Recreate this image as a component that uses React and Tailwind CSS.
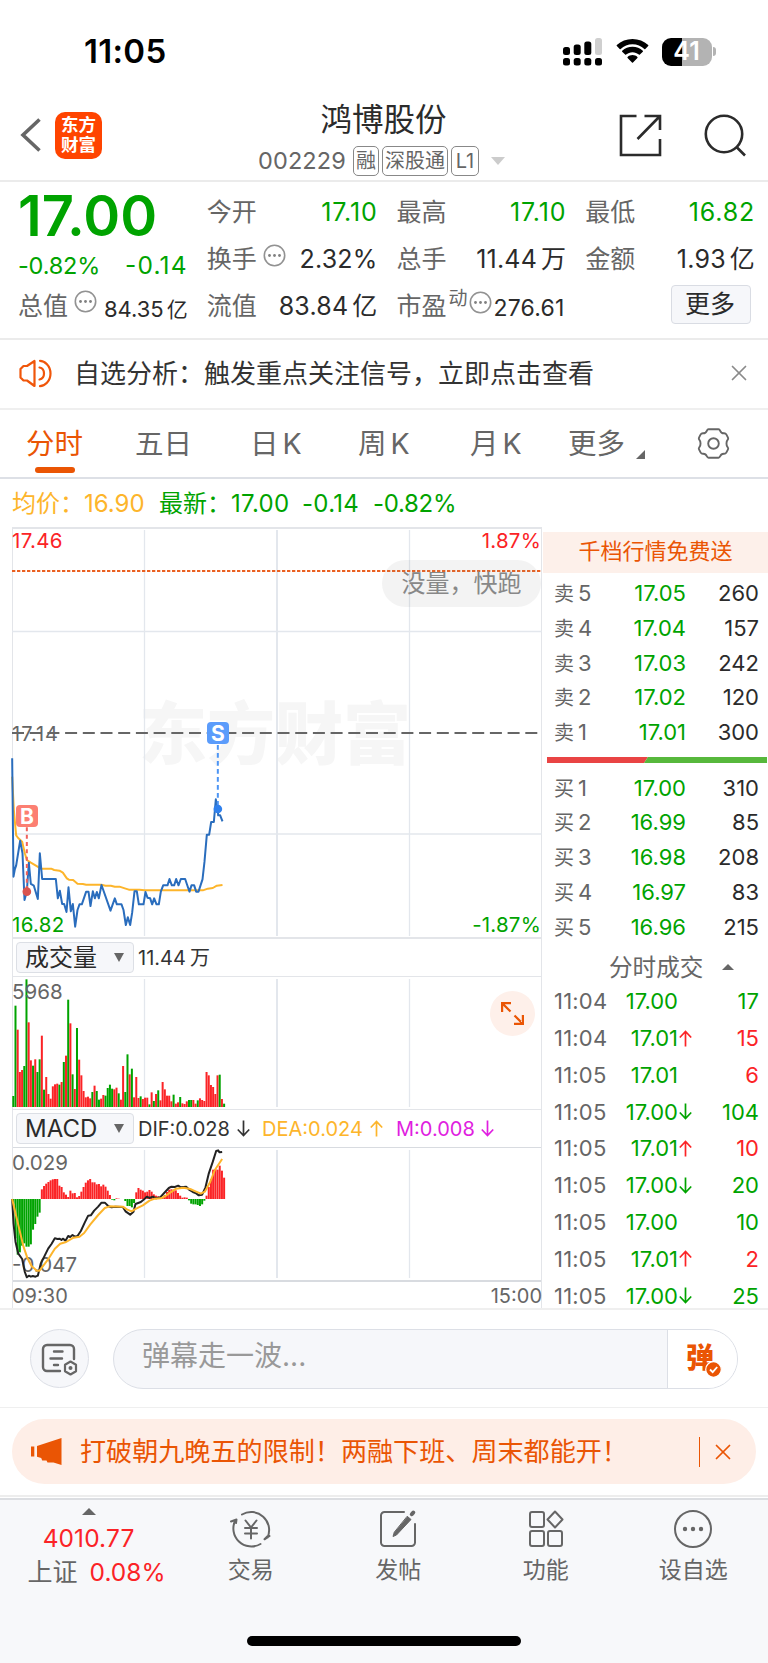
import { X } from 'lucide-react'

// per-minute series, starting at 09:30
const volume = [
  -33, -304, 232, 105, 111, -123, -383, 254, 140, -124, 143, -105, -143, 214, -52, 90, 39, 25, 62, 68,
  70, -67, 75, -135, 154, -322, 251, -98, 54, -237, 142, 95, 48, 29, 31, 26, -45, 64, -48, -22,
  25, 36, -34, -57, -67, -55, 53, 58, -41, 22, 123, -45, -158, 98, -115, 29, 90, 27, -32, 24,
  28, 28, -8, 44, -18, 39, -50, 20, 75, 53, 34, 34, 17, -37, 10, 14, -30, 11, 9, 17,
  -21, -21, 21, 10, -20, 26, 21, 18, 105, 95, 66, 60, 39, 95, -97, 24, -10,
]

const macd = [
  -14, -118, -167, -160, -140, -133, -143, -143, -136, -92, -75, -53, -41, 29, 39, 46, 51, 56, 59, 60,
  60, 40, 36, 20, 13, 6, 25, 17, 18, 5, 9, 22, 36, 49, 56, 60, 50, 50, 44, 45,
  38, 43, 37, 25, 12, -2, -4, 2, 1, 0, 0, -6, -21, -21, -25, -12, 20, 33, 28, 25,
  20, 22, 27, 22, 14, 10, 8, 2, 5, 12, 21, 28, 29, 28, 26, 18, 10, 4, 5, 4,
  -4, -14, -16, -16, -18, -21, -16, -5, 10, 36, 60, 88, 90, 88, 100, 85, 64,
]

const pricePath =
  '38,235 42,590 46,568 50,556 62,482 69,520 75,660 82,635 88,548 94,612 103,617 115,657 121,520 128,597 169,597 175,655 181,632 188,672 194,672 201,696 207,622 214,694 220,672 227,740 234,690 240,673 247,673 260,635 267,635 273,678 280,634 286,655 292,636 298,655 306,615 333,692 346,655 352,673 366,673 372,690 379,735 385,712 392,735 398,698 405,634 412,634 418,673 432,673 438,636 444,653 452,655 458,673 464,655 471,673 478,673 484,635 491,616 504,616 510,597 517,616 524,616 530,597 537,616 544,597 557,597 563,615 570,635 576,616 584,616 590,635 597,635 609,598 615,545 622,464 629,464 635,426 643,426 649,358 655,387 656,406 662,406 669,424'
const avgPath =
  '38,290 43,390 50,466 56,474 68,485 76,520 82,540 94,548 108,556 124,566 155,566 164,570 180,572 190,578 202,595 208,599 221,600 234,611 250,612 260,614 306,614 318,617 334,617 346,620 360,620 376,625 388,629 420,629 435,631 610,631 625,626 640,624 652,617 669,615'
const difPath =
  '38,297 42,370 48,425 56,460 68,477 76,516 82,532 88,527 94,530 100,528 108,530 115,527 124,490 136,466 146,446 156,432 166,415 174,417 180,416 186,420 190,416 198,422 206,408 212,411 219,405 226,410 234,408 244,393 256,367 266,347 274,346 284,332 296,320 306,308 316,308 326,318 336,322 348,320 370,321 378,334 392,344 402,335 408,312 424,306 434,298 442,290 450,294 460,290 470,295 482,292 494,279 508,264 516,260 526,261 536,257 544,262 560,260 570,270 580,276 590,280 598,286 608,284 618,262 628,220 640,185 650,153 656,151 660,157 668,156'
const deaPath =
  '38,297 48,340 60,390 72,440 84,475 96,498 112,512 120,512 132,496 148,475 166,446 182,431 200,426 222,413 240,410 254,399 272,374 296,345 316,324 330,319 370,320 382,328 396,334 410,326 430,316 450,302 466,296 484,295 498,288 512,278 530,266 552,263 572,267 588,274 604,281 616,275 632,246 646,210 668,177'

const asks = [
  ['卖5', '17.05', '260'],
  ['卖4', '17.04', '157'],
  ['卖3', '17.03', '242'],
  ['卖2', '17.02', '120'],
  ['卖1', '17.01', '300'],
]
const bids = [
  ['买1', '17.00', '310'],
  ['买2', '16.99', '85'],
  ['买3', '16.98', '208'],
  ['买4', '16.97', '83'],
  ['买5', '16.96', '215'],
]
const trades = [
  ['11:04', '17.00', '', '17', 'g'],
  ['11:04', '17.01', 'up', '15', 'r'],
  ['11:05', '17.01', '', '6', 'r'],
  ['11:05', '17.00', 'down', '104', 'g'],
  ['11:05', '17.01', 'up', '10', 'r'],
  ['11:05', '17.00', 'down', '20', 'g'],
  ['11:05', '17.00', '', '10', 'g'],
  ['11:05', '17.01', 'up', '2', 'r'],
  ['11:05', '17.00', 'down', '25', 'g'],
]

function Arrow({ dir, className }) {
  return (
    <svg width="13" height="17" viewBox="0 0 13 17" className={className} fill="none" stroke="currentColor" strokeWidth="1.7">
      <path d={dir === 'up' ? 'M6.5 16.5V1.5M.8 7.5l5.7-6 5.7 6' : 'M6.5.5v15M.8 9.5l5.7 6 5.7-6'} />
    </svg>
  )
}

function Dots() {
  return (
    <svg width="23" height="23" viewBox="0 0 23 23" fill="none" stroke="#929292" strokeWidth="1.6">
      <circle cx="11.5" cy="11.5" r="10.2" />
      <g fill="#808080" stroke="none">
        <circle cx="6.5" cy="11.5" r="1.4" />
        <circle cx="11.5" cy="11.5" r="1.4" />
        <circle cx="16.5" cy="11.5" r="1.4" />
      </g>
    </svg>
  )
}

function Cell({ label, value, unit, green }) {
  return (
    <div className="flex h-[47px] items-center justify-between">
      <span className="text-[#666]">{label}</span>
      <span className={green ? 'tracking-[0.8px] text-[#00a300]' : 'tracking-[0.2px] text-[#2b2b2b]'}>
        {value}
        {unit && <span className="ml-1">{unit}</span>}
      </span>
    </div>
  )
}

function StatusBar() {
  return (
    <div className="flex h-[96px] items-center justify-between pt-[7px] pr-[52px] pl-[84px]">
      <span className="text-[33px] font-semibold tracking-[0.3px] text-black">11:05</span>
      <div className="flex items-center">
        <svg width="39" height="28" viewBox="0 0 39 28">
          <rect x="0" y="9" width="7" height="8" rx="2.5" />
          <rect x="10.7" y="6.5" width="7" height="10.5" rx="2.5" />
          <rect x="21.3" y="3.5" width="7" height="13.5" rx="2.5" />
          <rect x="32" y="0" width="7" height="17" rx="2.5" fill="#cfcfcf" />
          <rect x="0" y="20" width="7" height="7.5" rx="2.5" />
          <rect x="10.7" y="20" width="7" height="7.5" rx="2.5" />
          <rect x="21.3" y="20" width="7" height="7.5" rx="2.5" />
          <rect x="32" y="20" width="7" height="7.5" rx="2.5" />
        </svg>
        <svg width="33" height="25" viewBox="0 0 33 25" className="ml-[14px]">
          <path d="M16.5 5.2c4.5 0 8.7 1.8 11.8 4.7.3.3.7.3 1 0l2.900-2.900c.3-.3.3-.7 0-1C28 2.200 22.500 0 16.500 0S5 2.200.8 6c-.3.3-.3.7 0 1l2.900 2.900c.3.3.7.3 1 0C7.800 7 12 5.200 16.500 5.200z" />
          <path d="M16.500 13.200c2.500 0 4.700.9 6.400 2.400.3.3.7.3 1 0l2.900-2.900c.3-.3.3-.7 0-1-2.700-2.500-6.300-4-10.300-4s-7.600 1.500-10.300 4c-.3.3-.3.7 0 1l2.900 2.900c.3.3.7.3 1 0 1.700-1.500 3.900-2.400 6.400-2.400z" />
          <path d="M21.400 18c.3.3.3.7 0 1l-4.400 4.600c-.3.3-.7.3-1 0L11.600 19c-.3-.3-.3-.7 0-1 1.300-1.200 3-1.900 4.900-1.900s3.600.7 4.900 1.900z" />
        </svg>
        <div className="ml-[13px] flex h-[28px] w-[50px] items-center justify-center rounded-[9px] bg-[linear-gradient(90deg,#000_41%,#b3b3b3_41%)] text-[25px] font-semibold text-white">
          41
        </div>
        <div className="ml-[1.500px] h-[9px] w-[3px] rounded-r-full bg-[#b3b3b3]" />
      </div>
    </div>
  )
}

function Header() {
  return (
    <header className="flex h-[86px] items-center justify-between border-b-2 border-[#ebebeb] pr-[22px] pl-[20px]">
      <div className="flex w-[200px] items-center pb-[6px]">
        <svg width="22" height="34" viewBox="0 0 22 34" fill="none" stroke="#666" strokeWidth="3.600">
          <path d="M19.500 1.500L3 17l16.500 15.500" />
        </svg>
        <div className="ml-[13px] flex h-[47px] w-[47px] flex-col items-center justify-center rounded-[10px] bg-[#ff4400] text-[17.500px] leading-[20px] font-bold text-white">
          <span>东方</span>
          <span>财富</span>
        </div>
      </div>
      <div className="flex flex-col items-center pl-[10px]">
        <h1 className="mr-[9px] text-[31.500px] leading-[40px] text-[#2b2b2b]">鸿博股份</h1>
        <div className="mt-[6px] mr-[13px] flex h-[30px] items-center text-[20px] text-[#666]">
          <span className="mr-[7px] text-[23.500px] tracking-[0.1px]">002229</span>
          <span className="mr-[3px] flex h-[30px] w-[26px] items-center justify-center rounded-[5px] border-[1.500px] border-[#888]">融</span>
          <span className="mr-[3px] flex h-[30px] w-[66px] items-center justify-center rounded-[5px] border-[1.500px] border-[#888]">深股通</span>
          <span className="flex h-[30px] w-[28px] items-center justify-center rounded-[5px] border-[1.500px] border-[#888]">L1</span>
          <svg width="14" height="8" viewBox="0 0 14 8" className="ml-[12px]">
            <path d="M0 0h14L7 8z" fill="#ccc" />
          </svg>
        </div>
      </div>
      <div className="flex w-[200px] justify-end gap-[42px] pb-[6px]">
        <svg width="43" height="43" viewBox="0 0 43 43" fill="none" stroke="#2b2b2b" strokeWidth="2.600">
          <path d="M17.500 2H2v39h39V25M25.500 2H41v14M41 2L18.500 25" />
        </svg>
        <svg width="42" height="43" viewBox="0 0 42 43" fill="none" stroke="#2b2b2b" strokeWidth="2.600">
          <circle cx="20" cy="20" r="18.200" />
          <path d="M32.500 33l8.500 8.500" />
        </svg>
      </div>
    </header>
  )
}

function Quote() {
  return (
    <section className="flex h-[158px] border-b-2 border-[#ebebeb] pt-[7px] pr-[13px] pl-[18px] text-[25px] leading-none">
      <div className="mr-[19px] w-[170px] text-[#00a300]">
        <div className="flex h-[53px] items-center text-[56px] font-semibold">17.00</div>
        <div className="flex h-[47px] items-center justify-between text-[23.500px] tracking-[-0.200px]">
          <span>-0.82%</span>
          <span className="text-[24.500px] tracking-[1.200px]">-0.14</span>
        </div>
        <div className="flex h-[35px] items-center justify-between text-[#666]">
          <span className="flex items-center">
            总值
            <span className="mb-[10px] ml-[6px]"><Dots /></span>
          </span>
          <span className="pt-[4px] text-[22px] whitespace-nowrap text-[#2b2b2b]">84.35<span className="ml-[3px] text-[21px]">亿</span></span>
        </div>
      </div>
      <div className="mr-[19px] w-[171px]">
        <Cell label="今开" value="17.10" green />
        <Cell
          label={<span className="flex items-center">换手<span className="mb-[8px] ml-[6px]"><Dots /></span></span>}
          value="2.32%"
        />
        <Cell label="流值" value="83.84" unit="亿" />
      </div>
      <div className="mr-[19px] w-[170px]">
        <Cell label="最高" value="17.10" green />
        <Cell label="总手" value="11.44" unit="万" />
        <div className="flex h-[47px] items-center whitespace-nowrap text-[#666]">
          市盈
          <span className="mb-[16px] ml-[2px] text-[19px]">动</span>
          <span className="mb-[8px] ml-[1px]"><Dots /></span>
          <span className="ml-[2px] pt-[3px] text-[23px] tracking-[0.200px] text-[#2b2b2b]">276.61</span>
        </div>
      </div>
      <div className="w-[170px]">
        <Cell label="最低" value="16.82" green />
        <Cell label="金额" value="1.93" unit="亿" />
        <div className="mt-[2px] mr-[4px] ml-auto flex h-[39px] w-[80px] items-center justify-center rounded-[4px] border border-[#d9dce3] bg-[#f6f7fa] pr-[2px] text-[#2b2b2b]">
          更多
        </div>
      </div>
    </section>
  )
}

function Notice() {
  return (
    <div className="flex h-[70px] items-center border-b-2 border-[#efefef] pr-[16px] pb-[2px] pl-[19px] text-[26px] text-[#333]">
      <svg width="34" height="29" viewBox="0 0 34 29" fill="none" stroke="#f0560a" strokeWidth="2.200" strokeLinejoin="round" strokeLinecap="round">
        <path d="M15.500 2v25L8 21.500H4.500l-3-3v-8.500l3-3H8zM21 1.800c4.500 0 10.500 4.700 10.500 12.700S25.500 27 21 27.200M20.500 8.500c2.500.5 4.500 2.500 4.500 6s-2 5.500-4.500 6" />
      </svg>
      <span className="ml-[21px]">自选分析：触发重点关注信号，立即点击查看</span>
      <X size={26} strokeWidth={1.600} className="ml-auto text-[#8a8a8a]" />
    </div>
  )
}

function KTab({ label, className }) {
  return (
    <span className={`pt-[20px] ${className}`}>
      {label}
      <span className="ml-[4px]">K</span>
    </span>
  )
}

function Tabs() {
  return (
    <nav className="flex h-[69px] border-b-2 border-[#dde0e6] pl-[26px] text-[28.500px] leading-none text-[#666]">
      <div className="flex w-[109px] flex-col pt-[20px] text-[#ea5504]">
        分时
        <span className="mt-[8px] ml-[9px] h-[6px] w-[40px] rounded-[3px] bg-[#ea5504]" />
      </div>
      <span className="w-[115px] pt-[20px]">五日</span>
      <KTab label="日" className="w-[108px]" />
      <KTab label="周" className="w-[112px]" />
      <KTab label="月" className="w-[95px]" />
      <span className="flex w-[128px] pt-[20px] pl-[3px] whitespace-nowrap">
        更多
        <svg width="9" height="9" viewBox="0 0 9 9" className="mt-[20px] ml-[11px]">
          <path d="M9 0v9H0z" fill="#666" />
        </svg>
      </span>
      <svg width="33" height="31" viewBox="0 0 33 31" className="mt-[18px] ml-[4px]" fill="none" stroke="#666" strokeWidth="1.900" strokeLinejoin="round">
        <path d="M11.500 1.300h10c1 0 1.300.6 1.700 1.500.7 1.800 2 2.600 3.900 2.500 1.300 0 1.700.2 2.200 1.100l1.700 3.200c.5.900.3 1.400-.4 2.200-1.500 1.700-1.500 5.700 0 7.400.7.800.9 1.300.4 2.200l-1.700 3.200c-.5.900-.9 1.100-2.200 1.100-1.900-.1-3.200.7-3.900 2.500-.4.900-.7 1.500-1.700 1.500h-10c-1 0-1.300-.6-1.700-1.500-.7-1.800-2-2.600-3.900-2.500-1.300 0-1.700-.2-2.200-1.100L2 21.400c-.5-.9-.3-1.400.4-2.200 1.500-1.700 1.500-5.700 0-7.400C1.700 11 1.500 10.500 2 9.600l1.700-3.200c.5-.9.9-1.100 2.200-1.100 1.900.1 3.200-.7 3.900-2.500.4-.9.700-1.500 1.700-1.500z" />
        <circle cx="16.500" cy="15.500" r="5.300" />
      </svg>
    </nav>
  )
}

// vertical grid lines shared by all three panes
function Grid({ h }) {
  return (
    <g stroke="#e3e7ed">
      <path d={`M132.500 2v${h - 4}M397.500 2v${h - 4}`} strokeWidth="1.300" />
      <path d={`M265 2v${h - 4}`} strokeWidth="2" />
    </g>
  )
}

function PriceChart() {
  return (
    <div className="relative h-[412px] border-y-2 border-[#e3e5e9] text-[20.500px] leading-none">
      <svg width="529" height="410" viewBox="0 0 529 410" className="absolute -top-px -left-px overflow-visible">
        <text x="263" y="231" textAnchor="middle" fontSize="68" fontWeight="900" fill="#f6f6f6">东方财富</text>
        <Grid h={410} />
        <path d="M0 103.500h530M0 306h530" stroke="#e3e7ed" strokeWidth="1.500" />
        <path d="M0 43h530" stroke="#ea6020" strokeWidth="2" strokeDasharray="3.300 1.700" />
        <path d="M0 205h530" stroke="#666" strokeWidth="2" strokeDasharray="12 5.700" />
        <g transform="translate(-12.500 152) scale(.33333)" fill="none" strokeLinejoin="round">
          <polyline points={avgPath} stroke="#fdb52b" strokeWidth="6" />
          <polyline points={pricePath} stroke="#2a6dbd" strokeWidth="6" />
          <path d="M82 442V630" stroke="#f0625c" strokeWidth="6" strokeDasharray="12 10" />
          <circle cx="82" cy="635" r="13" fill="#d9544f" />
          <path d="M655 195V380" stroke="#4c95f5" strokeWidth="6" strokeDasharray="14 10" />
          <circle cx="655" cy="387" r="13" fill="#2f80ed" />
        </g>
        <rect x="4" y="277" width="22" height="22" rx="4" fill="#fc7f72" />
        <rect x="195" y="194" width="22" height="22" rx="4" fill="#5b9cfb" />
        <g fill="#fff" fontSize="21" fontWeight="700" textAnchor="middle">
          <text x="15" y="295.600">B</text>
          <text x="206" y="212.600">S</text>
        </g>
      </svg>
      <span className="absolute top-[2px] -left-px tracking-[0.300px] text-[#fb2326]">17.46</span>
      <span className="absolute top-[2px] right-0 tracking-[0.200px] text-[#fb2326]">1.87%</span>
      <span className="absolute top-[195px] -left-px text-[20px] tracking-[1px] text-[#666]">17.14</span>
      <span className="absolute bottom-[2px] -left-px tracking-[0.300px] text-[#00a300]">16.82</span>
      <span className="absolute right-0 bottom-[2px] tracking-[0.200px] text-[#00a300]">-1.87%</span>
      <span className="absolute top-[31px] right-0 flex h-[47px] w-[159px] items-center justify-center rounded-full bg-[#888]/10 text-[24px] text-[#888]">
        没量，快跑
      </span>
    </div>
  )
}

function Picker({ label }) {
  return (
    <span className="ml-[3px] flex h-[31px] w-[118px] items-center justify-between rounded-[4px] border border-[#dcdfe5] bg-[#f6f7fa] pr-[9px] pl-[8px] text-[24px] text-[#2b2b2b]">
      {label}
      <svg width="10" height="9" viewBox="0 0 10 9">
        <path d="M0 0h10L5 9z" fill="#666" />
      </svg>
    </span>
  )
}

function VolumeChart() {
  return (
    <div className="relative h-[134px] border-y border-[#e3e5e9] text-[20.500px] leading-none">
      <svg width="529" height="132" viewBox="0 0 529 132" className="absolute top-0 -left-px">
        <Grid h={132} />
        {volume.map((v, i) => (
          <rect key={i} x={0.3 + i * 2.196} y={130 - Math.abs(v) / 3} width="2" height={Math.abs(v) / 3} fill={v > 0 ? '#fb2326' : '#00a300'} />
        ))}
      </svg>
      <span className="absolute top-[5px] -left-px text-[#666]">5968</span>
      <span className="absolute top-[14px] right-[6px] flex h-[45px] w-[45px] items-center justify-center rounded-full bg-[#fef0ea]">
        <svg width="23" height="23" viewBox="0 0 23 23" fill="none" stroke="#ea5504" strokeWidth="2.200">
          <path d="M1.100 10V1.100H10M1.100 1.100l8.400 8.400M21.900 13v8.900H13M21.900 21.900l-8.400-8.400" />
        </svg>
      </span>
    </div>
  )
}

function MacdChart() {
  return (
    <div className="relative h-[135px] border-t border-b-2 border-[#d8dbe0] text-[20.500px] leading-none">
      <svg width="529" height="132" viewBox="0 0 529 132" className="absolute top-0 -left-px overflow-visible">
        <Grid h={132} />
        {macd.map((v, i) => (
          <rect key={i} x={0.3 + i * 2.196} y={v > 0 ? 51 - v / 3 : 51} width="2" height={Math.abs(v) / 3} fill={v > 0 ? '#fb2326' : '#00a300'} />
        ))}
      </svg>
      <span className="absolute top-[5px] -left-px text-[#666]">0.029</span>
      <span className="absolute bottom-[5px] -left-px text-[#666]">-0.047</span>
      <svg width="529" height="132" viewBox="0 0 529 132" className="absolute top-0 -left-px overflow-visible">
        <g transform="translate(-12.500 -48) scale(.33333)" fill="none" strokeLinejoin="round" strokeWidth="6">
          <polyline points={difPath} stroke="#222" />
          <polyline points={deaPath} stroke="#fdb52b" />
        </g>
      </svg>
    </div>
  )
}

function BookRow({ row }) {
  return (
    <div className="flex h-[34.700px] items-center">
      <span className="w-[50px] text-[20px] text-[#666]">
        {row[0][0]}
        <span className="ml-[4px] text-[22px]">{row[0][1]}</span>
      </span>
      <span className="w-[82px] text-right text-[#00a300]">{row[1]}</span>
      <span className="flex-1 text-right text-[#2b2b2b]">{row[2]}</span>
    </div>
  )
}

function OrderBook() {
  return (
    <aside className="h-[780px] w-[226px] text-[22px] leading-none">
      <div className="mt-[5px] ml-[1px] flex h-[41px] items-center justify-center bg-[#fdf0ea] pb-[4px] text-[22px] text-[#ea5504]">
        千档行情免费送
      </div>
      <div className="mt-[3px] pr-[9px] pl-[12px]">
        {asks.map((r) => <BookRow key={r[0]} row={r} />)}
      </div>
      <svg width="220" height="6" viewBox="0 0 220 6" className="mt-[8px] ml-[5px]">
        <path d="M0 0h101l-4 6H0z" fill="#e94444" />
        <path d="M101 0h119v6H97z" fill="#57b83c" />
      </svg>
      <div className="mt-[7px] pr-[9px] pl-[12px]">
        {bids.map((r) => <BookRow key={r[0]} row={r} />)}
      </div>
      <div className="mt-[4px] flex h-[39px] items-center pl-[67px] text-[23.600px] text-[#666]">
        分时成交
        <svg width="12" height="6" viewBox="0 0 12 6" className="ml-[19px]">
          <path d="M6 0l6 6H0z" fill="#666" />
        </svg>
      </div>
      <div className="-mt-[4px] pr-[9px] pl-[12px]">
        {trades.map(([time, price, dir, qty, tone], i) => (
          <div key={i} className="flex h-[36.800px] items-center">
            <span className="w-[56px] text-[22px] tracking-[0.200px] text-[#666]">{time}</span>
            <span className="w-[68px] text-right text-[#00a300]">{price}</span>
            <span className="ml-[1px] w-[14px]">
              {dir && <Arrow dir={dir} className={dir === 'up' ? 'text-[#fb2326]' : 'text-[#00a300]'} />}
            </span>
            <span className={`flex-1 text-right ${tone === 'r' ? 'text-[#fb2326]' : 'text-[#00a300]'}`}>{qty}</span>
          </div>
        ))}
      </div>
    </aside>
  )
}

function Market() {
  return (
    <section className="h-[831px] border-b-2 border-[#efefef]">
      <div className="flex h-[48px] items-center pt-px pl-[12px] text-[24px] whitespace-pre text-[#00a300]">
        <span className="text-[#fdb52b]">均价：</span>
        <span className="w-[75px] text-[#fdb52b]">16.90</span>
        <span>最新：</span>
        <span className="w-[71px] tracking-[0.300px]">17.00</span>
        <span className="w-[71px] tracking-[0.300px]">-0.14</span>
        <span className="tracking-[-0.300px]">-0.82%</span>
      </div>
      <div className="flex">
        <div className="ml-[12px] w-[530px] border-r border-l border-[#e3e5e9]">
          <PriceChart />
          <div className="flex h-[37px] items-center text-[20px] leading-none text-[#333]">
            <Picker label="成交量" />
            <span className="ml-[4px]">11.44<span className="ml-1">万</span></span>
          </div>
          <VolumeChart />
          <div className="flex h-[37px] items-center text-[20px] leading-none text-[#333]">
            <Picker label="MACD" />
            <span className="ml-[4px] w-[99px]">DIF:0.028</span>
            <Arrow dir="down" />
            <span className="ml-[12px] w-[108px] text-[#fdb52b]">DEA:0.024</span>
            <Arrow dir="up" className="text-[#fdb52b]" />
            <span className="ml-[13px] w-[85px] text-[#e01ee0]">M:0.008</span>
            <Arrow dir="down" className="text-[#e01ee0]" />
          </div>
          <MacdChart />
          <div className="-mr-px -ml-px flex h-[26px] items-center justify-between pt-[2px] text-[20px] leading-none text-[#666]">
            <span>09:30</span>
            <span>15:00</span>
          </div>
        </div>
        <OrderBook />
      </div>
    </section>
  )
}

function CommentBar() {
  return (
    <div className="flex h-[98px] items-center border-b border-[#efefef] pr-[30px] pl-[30px]">
      <div className="flex h-[59px] w-[59px] items-center justify-center rounded-full border border-[#dcdfe6] bg-[#f6f7fa]">
        <svg width="37" height="33" viewBox="0 0 37 33" className="mt-[2px]" fill="none" stroke="#666" strokeWidth="2.400" strokeLinecap="round">
          <path d="M19 28H6a4 4 0 0 1-4-4V6a4 4 0 0 1 4-4h23a4 4 0 0 1 4 4v10M13 8.500h8.500M9.500 15.500h11.500M13 22h4" />
          <path d="M29.500 18.500l5.500 3.200v6.600l-5.500 3.200-5.500-3.200v-6.600z" strokeLinejoin="round" strokeWidth="2.200" />
          <circle cx="29.500" cy="25" r="2" fill="#666" stroke="none" />
        </svg>
      </div>
      <div className="ml-[24px] flex h-[60px] w-[625px] overflow-hidden rounded-full border border-[#dcdfe6] bg-[#f6f7fa]">
        <span className="flex-1 pt-[5px] pl-[28px] text-[28px] text-[#999]">弹幕走一波...</span>
        <div className="relative w-[70px] border-l border-[#dcdfe6] bg-white">
          <span className="absolute top-[10px] left-[18px] text-[28px] leading-[36px] font-black text-[#ea5504]">弹</span>
          <svg width="17" height="17" viewBox="0 0 17 17" className="absolute top-[31px] left-[37px]">
            <circle cx="8.500" cy="8.500" r="7.800" fill="#ea5504" stroke="#fff" strokeWidth="1.200" />
            <path d="M5 8.500l2.700 2.700L12.200 6" fill="none" stroke="#fff" strokeWidth="1.800" />
          </svg>
        </div>
      </div>
    </div>
  )
}

function Promo() {
  return (
    <div className="mb-px flex h-[89px] border-b-2 border-[#ededed] px-[12px] pt-[11px]">
      <div className="flex h-[65px] w-[744px] items-center rounded-full bg-[#feeee7] pr-[20px] pl-[19px] text-[26.100px] text-[#ea5504]">
        <svg width="31" height="27" viewBox="0 0 31 27" fill="#ea5504">
          <path d="M0 8.500h3.300v10H0zM6 8L30.500 0v27l-8-2.500v0h-6l-1-2h-4.300l-1-2.600L6 18.700z" />
        </svg>
        <span className="ml-[18px]">打破朝九晚五的限制！两融下班、周末都能开！</span>
        <span className="ml-auto h-[30px] w-[1.500px] bg-[#ea5504]" />
        <X size={26} strokeWidth={1.600} className="ml-[10px]" />
      </div>
    </div>
  )
}

function NavItem({ label, children }) {
  return (
    <div className="flex w-[147.500px] flex-col items-center pt-px">
      <svg width="44" height="40" viewBox="0 0 44 40" fill="none" stroke="#666" strokeWidth="2" strokeLinecap="round" strokeLinejoin="round">
        {children}
      </svg>
      <span className="mt-[6px]">{label}</span>
    </div>
  )
}

function BottomBar() {
  return (
    <footer className="flex h-[165px] flex-col items-center justify-between border-t-2 border-[#dcdee2] bg-[#f7f8fa] pb-[17px]">
      <div className="flex w-full pt-[8px] text-[23px] leading-[30px] text-[#666]">
        <div className="flex w-[177px] flex-col items-center">
          <svg width="14" height="7" viewBox="0 0 14 7">
            <path d="M7 0l7 7H0z" fill="#666" />
          </svg>
          <span className="mt-[8px] text-[24.500px] tracking-[0.100px] text-[#fb2326]">4010.77</span>
          <span className="mt-[4px] ml-[16px] text-[25px] whitespace-nowrap">
            上证 <span className="ml-[5px] text-[24.500px] text-[#fb2326]">0.08%</span>
          </span>
        </div>
        <NavItem label="交易">
          <path d="M13 5.500A18 18 0 0 1 38.500 28.500M40.500 27l-5 3.300 3-3M31.500 35A18 18 0 0 1 6.500 11M2 12.500l5.500-2-.5 3.500" />
          <path d="M16.500 11.500l5.500 7 5.500-7M22 18.500v11M16 19h12M16 24.500h12" />
        </NavItem>
        <NavItem label="发帖">
          <path d="M28 3H8.500A3.500 3.500 0 0 0 5 6.500v27A3.500 3.500 0 0 0 8.500 37h27a3.500 3.500 0 0 0 3.500-3.500V15" />
          <path d="M31.500 7.500l3.500 3L20.500 26l-3.500 1.500 1.200-4z" fill="#666" strokeWidth="1" />
          <path d="M35.800 5.200l1.500-1.700" strokeWidth="4" />
        </NavItem>
        <NavItem label="功能">
          <rect x="6" y="3" width="14" height="15" rx="2" />
          <rect x="6" y="22" width="14" height="15" rx="2" />
          <rect x="24" y="22" width="14" height="15" rx="2" />
          <path d="M31 2.500l7.500 8-7.500 8-7.500-8z" />
        </NavItem>
        <NavItem label="设自选">
          <circle cx="22" cy="20" r="18" />
          <g fill="#666" stroke="none">
            <circle cx="14" cy="20" r="2.200" />
            <circle cx="22" cy="20" r="2.200" />
            <circle cx="30" cy="20" r="2.200" />
          </g>
        </NavItem>
      </div>
      <div className="h-[10px] w-[274px] rounded-full bg-black" />
    </footer>
  )
}

export default function App() {
  return (
    <div className="min-h-[1663px] w-[768px] bg-white font-['Inter','Noto_Sans_CJK_SC',sans-serif]">
      <StatusBar />
      <Header />
      <Quote />
      <Notice />
      <Tabs />
      <Market />
      <CommentBar />
      <Promo />
      <BottomBar />
    </div>
  )
}
